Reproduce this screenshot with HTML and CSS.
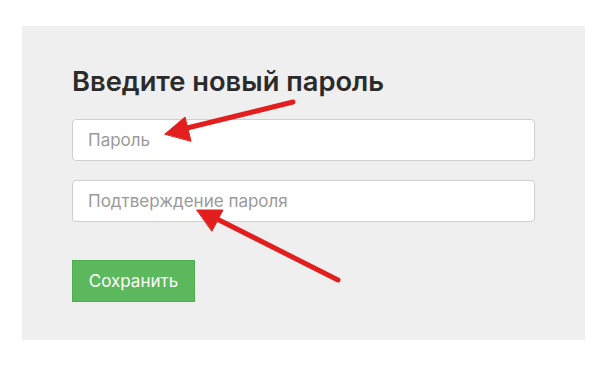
FILE: index.html
```html
<!DOCTYPE html>
<html lang="ru">
  <head>
    <meta charset="UTF-8" />
    <meta name="viewport" content="width=device-width, initial-scale=1.0" />
    <title>Новый пароль</title>
    <link rel="stylesheet" href="styles.css">
  </head>
  <body>
    <section class="reset-box">
      <h2 class="reset-title">Введите новый пароль</h2>
      <form class="reset-form">
        <input class="form-input" type="password" placeholder="Пароль" />
        <input class="form-input" type="password" placeholder="Подтверждение пароля" />
        <button class="btn-save" type="button">Сохранить</button>
      </form>
    </section>

    <!-- annotation arrows -->
    <svg class="arrows" width="608" height="386" viewBox="0 0 608 386">
      <g fill="#e31e1e" stroke="#e31e1e" stroke-linecap="round">
        <line x1="293" y1="102" x2="183" y2="129" stroke-width="5" />
        <polygon points="165,134 185,117 191,141" stroke-width="1" stroke-linejoin="round" />
        <line x1="338" y1="280" x2="215" y2="218" stroke-width="5" />
        <polygon points="197,210 223,210 212,231" stroke-width="1" stroke-linejoin="round" />
      </g>
    </svg>
  </body>
</html>
```

FILE: styles.css
```css
* {
  margin: 0;
  padding: 0;
  box-sizing: border-box;
}

body {
  background: #fff;
  font-family: Inter, "Noto Sans", sans-serif;
}

.reset-box {
  width: 563px;
  height: 314px;
  margin: 26px 0 0 22px;
  padding: 0 50px;
  background: #efefef;
}

.reset-title {
  padding-top: 36px;
  font-size: 27.3px;
  font-weight: 600;
  line-height: 40px;
  color: #2b2b2b;
  margin-bottom: 17px;
}

.reset-form {
  display: flex;
  flex-direction: column;
  align-items: flex-start;
  gap: 19px;
}

.form-input {
  width: 463px;
  height: 42px;
  padding: 0 15px;
  border: 1px solid #cfcfcf;
  border-radius: 4px;
  background: #fff;
  font-family: Inter, "Noto Sans", sans-serif;
  font-size: 17px;
  color: #333;
}

.form-input::placeholder {
  color: #9a9a9a;
}

.btn-save {
  margin-top: 19px;
  width: 123px;
  height: 42px;
  background: #5cb85c;
  border: 1px solid #4cae4c;
  color: #fff;
  font-family: Inter, "Noto Sans", sans-serif;
  font-size: 17px;
}

.arrows {
  position: absolute;
  top: 0;
  left: 0;
  pointer-events: none;
}
```
